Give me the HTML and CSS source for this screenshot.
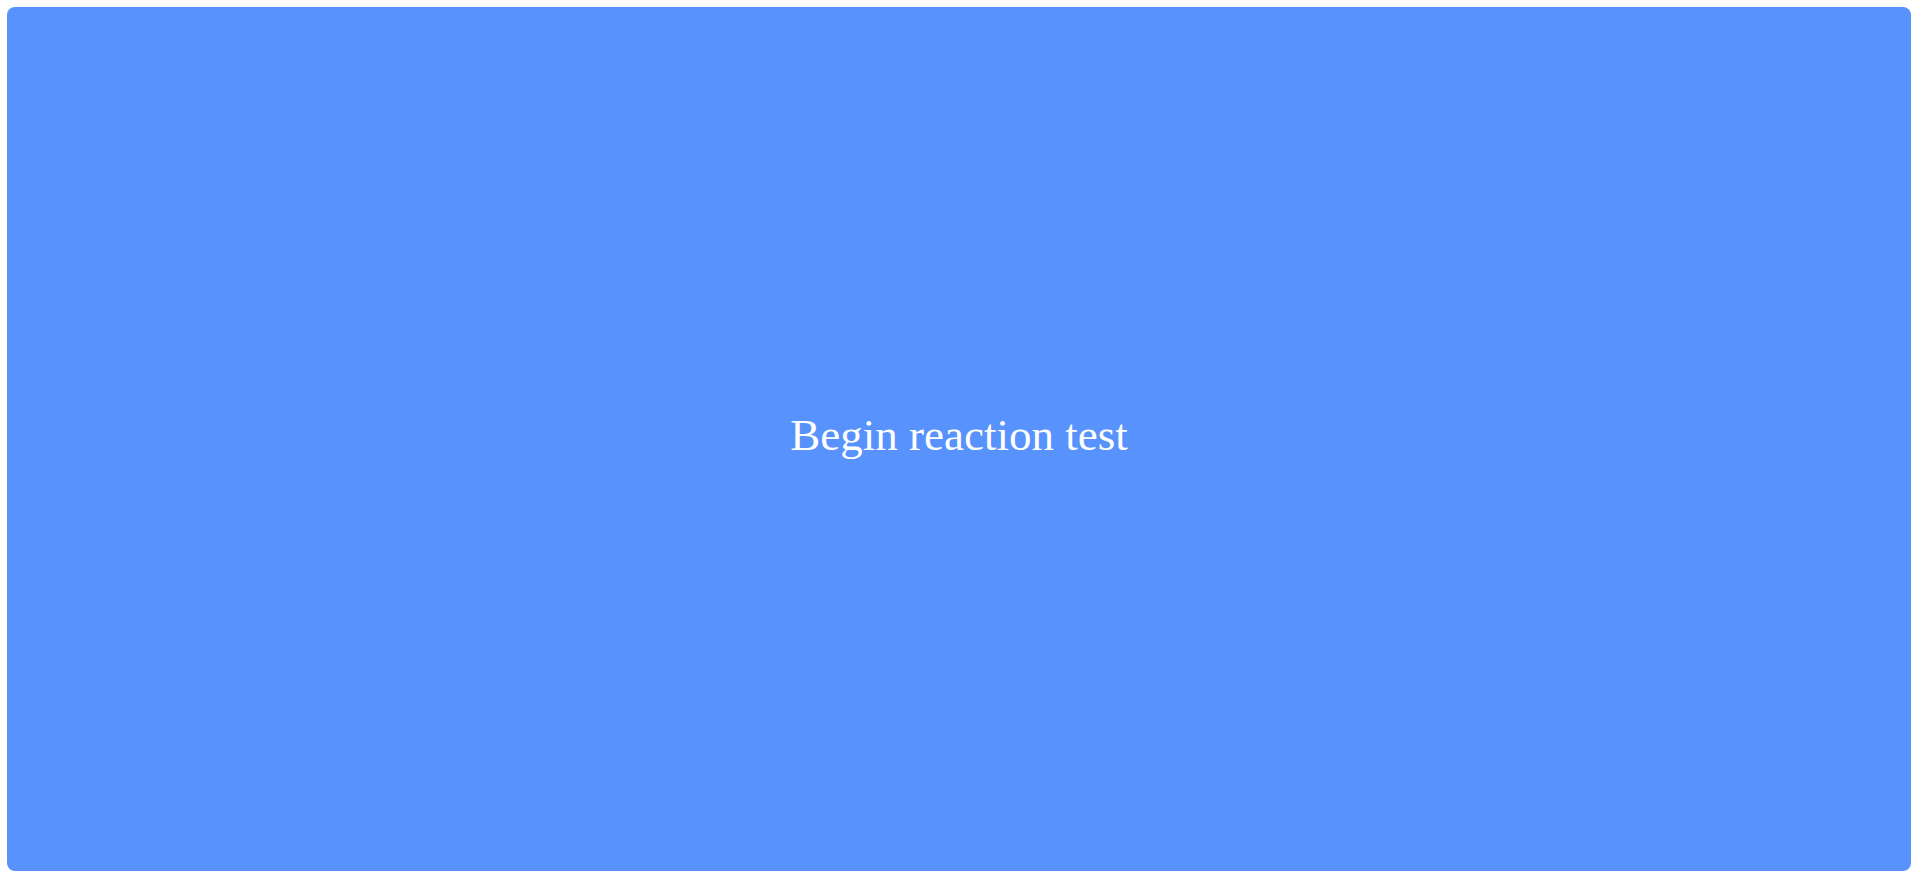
FILE: index.html
```html
<!DOCTYPE html>
<html>
<head>
<meta charset="utf-8">
<link rel="stylesheet" href="styles.css">
</head>
<body>
<div class="page">
  <div class="panel">
    <span class="label">Begin reaction test</span>
  </div>
</div>
</body>
</html>
```
FILE: styles.css
```css
html, body {
  margin: 0;
  padding: 0;
  background: #ffffff;
}
.page {
  padding: 7px 5px 6px 7px;
  box-sizing: border-box;
  height: 877px;
  display: flex;
}
.panel {
  flex: 1;
  background: #5792fd;
  border-radius: 8px;
  display: flex;
  align-items: center;
  justify-content: center;
  padding-bottom: 9px;
}
.label {
  font-family: "Liberation Serif", "Times New Roman", serif;
  font-size: 45px;
  color: #ffffff;
}
```
